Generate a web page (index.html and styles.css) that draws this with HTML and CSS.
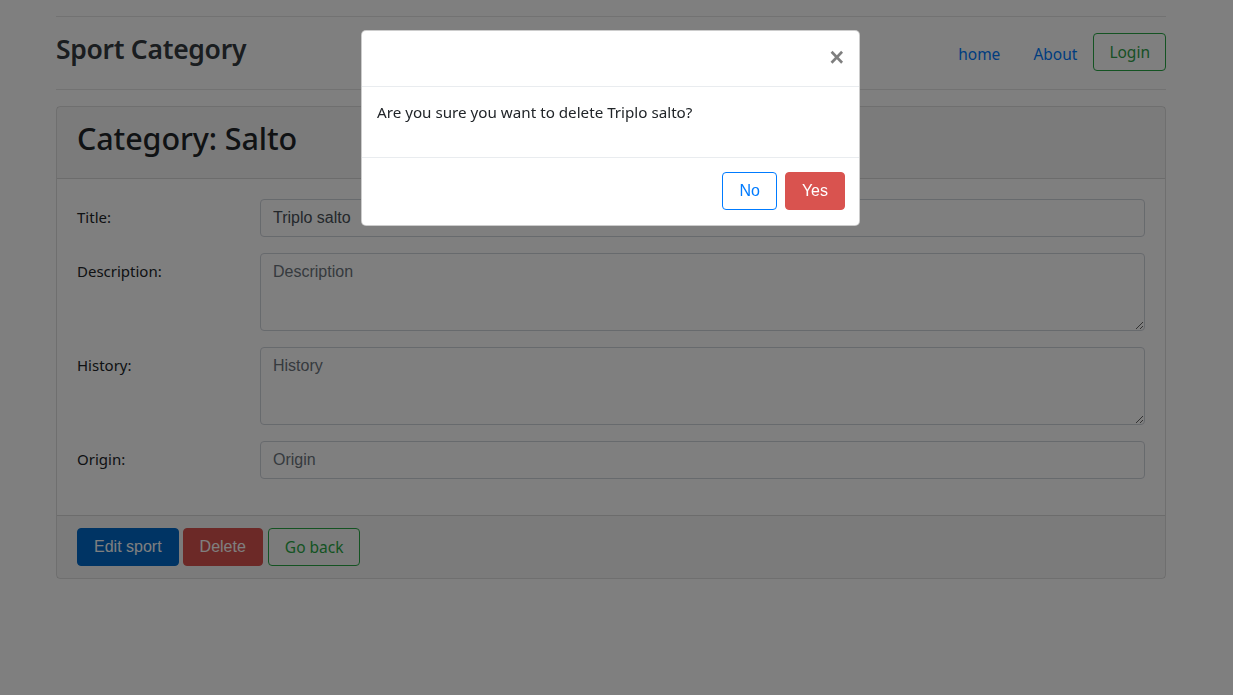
FILE: index.html
```html
<!DOCTYPE html>
<html lang="en">
<head>
<meta charset="utf-8">
<title>Sport Category</title>
<link rel="stylesheet" href="styles.css">
</head>
<body>
<div class="wrap">
  <header class="topbar">
    <h2 class="brand">Sport Category</h2>
    <nav class="nav">
      <a class="nav-link" href="#">home</a>
      <a class="nav-link" href="#">About</a>
      <a class="btn btn-outline-success btn-seg" href="#">Login</a>
    </nav>
  </header>

  <section class="card">
    <div class="card-header"><h1 class="card-title">Category: Salto</h1></div>
    <div class="card-body">
      <div class="form-row">
        <label class="label">Title:</label>
        <input class="control" type="text" value="Triplo salto">
      </div>
      <div class="form-row">
        <label class="label">Description:</label>
        <textarea class="control area" placeholder="Description"></textarea>
      </div>
      <div class="form-row">
        <label class="label">History:</label>
        <textarea class="control area" placeholder="History"></textarea>
      </div>
      <div class="form-row">
        <label class="label">Origin:</label>
        <input class="control" type="text" placeholder="Origin">
      </div>
    </div>
    <div class="card-footer">
      <button class="btn btn-primary">Edit sport</button>
      <button class="btn btn-danger">Delete</button>
      <button class="btn btn-outline-success btn-seg">Go back</button>
    </div>
  </section>
</div>

<div class="backdrop"></div>

<div class="modal">
  <div class="modal-header">
    <button class="close" aria-label="Close">&times;</button>
  </div>
  <div class="modal-body">
    <p>Are you sure you want to delete Triplo salto?</p>
  </div>
  <div class="modal-footer">
    <button class="btn btn-outline-primary">No</button>
    <button class="btn btn-danger">Yes</button>
  </div>
</div>
</body>
</html>
```

FILE: styles.css
```css
* { box-sizing: border-box; }

html, body {
  margin: 0;
  height: 100%;
}

body {
  background: #fff;
  color: #212529;
  font-family: "Noto Sans", "Open Sans", sans-serif;
  font-size: 16px;
  line-height: 1.5;
}

.wrap {
  width: 1110px;
  margin-left: 56px;
  padding-top: 16px;
}

.topbar {
  display: flex;
  align-items: center;
  justify-content: space-between;
  height: 74px;
  border-top: 1px solid rgba(0, 0, 0, 0.1);
  border-bottom: 1px solid rgba(0, 0, 0, 0.1);
}

.brand {
  margin: 0 0 6px 0;
  font-size: 26.5px;
  font-weight: 600;
  color: #343a40;
  letter-spacing: -0.3px;
}

.nav {
  display: flex;
  align-items: center;
}

.nav-link {
  color: #007bff;
  text-decoration: none;
  padding: 8px 16px 4px;
  font-size: 15.5px;
}

.nav-link:first-child {
  padding-left: 18px;
  padding-right: 17px;
}

.btn {
  display: inline-block;
  height: 38px;
  padding: 6px 16px;
  font-family: "Liberation Sans", Arial, sans-serif;
  font-size: 16px;
  line-height: 24px;
  border: 1px solid transparent;
  border-radius: 4px;
  text-decoration: none;
  cursor: pointer;
  vertical-align: middle;
}

.btn-seg {
  font-family: "Noto Sans", "Open Sans", sans-serif;
  font-size: 15.5px;
}

.nav .btn {
  margin-bottom: 2px;
  padding: 6px 15px;
  color: #2fa14a;
}

.btn-primary {
  background: #0069c8;
  border-color: #0069c8;
  color: #fff;
}

.btn-danger {
  background: #d9534f;
  border-color: #d9534f;
  color: #fff;
}

.btn-outline-success {
  background: transparent;
  border-color: #28a745;
  color: #28a745;
}

.btn-outline-primary {
  background: #fff;
  border-color: #007bff;
  color: #007bff;
}

.card {
  margin-top: 16px;
  border: 1px solid rgba(0, 0, 0, 0.125);
  border-radius: 4px;
}

.card-header {
  height: 72px;
  display: flex;
  align-items: center;
  padding: 0 20px;
  background: rgba(0, 0, 0, 0.03);
  border-bottom: 1px solid rgba(0, 0, 0, 0.125);
}

.card-title {
  margin: 0 0 7px 0;
  font-size: 30.5px;
  font-weight: 500;
  color: #212529;
  letter-spacing: -0.1px;
}

.card-body {
  padding: 20px;
}

.form-row {
  display: grid;
  grid-template-columns: 183px 1fr;
  margin-bottom: 16px;
}

.label {
  padding-top: 6px;
  font-size: 15px;
  line-height: 24px;
  color: #212529;
}

.control {
  display: block;
  width: 100%;
  height: 38px;
  padding: 6px 12px;
  font-family: "Liberation Sans", Arial, sans-serif;
  font-size: 16px;
  line-height: 24px;
  color: #495057;
  background: #fff;
  border: 1px solid #ced4da;
  border-radius: 4px;
  margin: 0;
}

.control::placeholder {
  color: #6c757d;
  opacity: 1;
}

.area {
  height: 78px;
  resize: vertical;
}

.card-footer {
  display: flex;
  gap: 4px;
  padding: 12px 20px;
  background: rgba(0, 0, 0, 0.03);
  border-top: 1px solid rgba(0, 0, 0, 0.125);
}

.card-footer .btn-seg {
  margin-left: 1px;
}

.backdrop {
  position: fixed;
  inset: 0;
  background: rgba(0, 0, 0, 0.5);
}

.modal {
  position: absolute;
  left: 361px;
  top: 30px;
  width: 499px;
  background: #fff;
  border: 1px solid rgba(0, 0, 0, 0.2);
  border-radius: 5px;
}

.modal-header {
  height: 56px;
  display: flex;
  align-items: center;
  justify-content: flex-end;
  padding: 0 15px;
  border-bottom: 1px solid #e9ecef;
}

.close {
  background: none;
  border: 0;
  padding: 0;
  margin-top: -2px;
  font-family: "Liberation Sans", Arial, sans-serif;
  font-size: 25px;
  font-weight: 700;
  line-height: 1;
  color: #000;
  opacity: 0.5;
}

.modal-body {
  padding: 14px 15px 17px;
}

.modal-body p {
  margin: 0 0 16px;
  font-size: 15.2px;
  color: #212529;
}

.modal-footer {
  display: flex;
  justify-content: flex-end;
  gap: 8px;
  padding: 14px 14px 15px;
  border-top: 1px solid #e9ecef;
}
```
